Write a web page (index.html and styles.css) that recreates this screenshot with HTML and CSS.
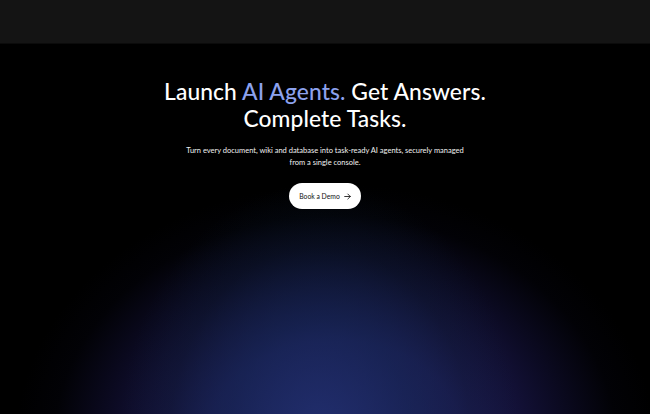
FILE: index.html
```html
<!DOCTYPE html>
<html lang="en">
<head>
<meta charset="utf-8">
<title>Launch AI Agents</title>
<link rel="stylesheet" href="styles.css">
</head>
<body>
<header class="topbar"></header>
<main class="hero">
  <div class="glow"></div>
  <div class="content">
    <h1 class="title">Launch <span class="accent">AI Agents.</span> Get Answers.<br>Complete Tasks.</h1>
    <p class="subtitle">Turn every document, wiki and database into task-ready AI agents, securely managed<br>from a single console.</p>
    <a class="btn" href="#">Book a Demo
      <svg class="arrow" viewBox="0 0 10 10" width="7" height="7"><path d="M1 5h8M5.5 1.5L9 5 5.5 8.5" fill="none" stroke="#111" stroke-width="1.2" stroke-linecap="round" stroke-linejoin="round"/></svg>
    </a>
  </div>
</main>
</body>
</html>
```
FILE: styles.css
```css
* { box-sizing: border-box; }
html, body { margin: 0; padding: 0; height: 100%; }
body {
  background: #000;
  font-family: "Lato", "Open Sans", sans-serif;
  color: #fff;
  overflow: hidden;
}
.topbar {
  height: 44px;
  background: #141414;
  border-bottom: 1px solid #0b0b0b;
}
.hero {
  position: relative;
  height: 370px;
  overflow: hidden;
}
.glow {
  position: absolute;
  inset: 0;
  background:
    radial-gradient(ellipse 200px 250px at 320px 390px, rgba(32,48,110,0.85) 0%, rgba(18,40,80,0.55) 45%, rgba(10,28,45,0.3) 75%, rgba(0,0,0,0) 100%),
    radial-gradient(ellipse 320px 260px at 335px 400px, rgba(40,34,108,1) 0%, rgba(34,30,96,0.9) 40%, rgba(20,18,60,0.6) 70%, rgba(6,6,20,0.3) 88%, rgba(0,0,0,0) 100%);
}
.content {
  position: relative;
  display: flex;
  flex-direction: column;
  align-items: center;
  padding-top: 34px;
}
.title {
  margin: 0;
  font-size: 22.8px;
  line-height: 27px;
  font-weight: 500;
  text-align: center;
  letter-spacing: 0.1px;
}
.accent { color: #8ca2ee; }
.subtitle {
  margin: 13px 0 0;
  font-size: 7.5px;
  line-height: 11.5px;
  text-align: center;
  color: #f0f0f0;
}
.btn {
  margin-top: 15px;
  display: inline-flex;
  align-items: center;
  gap: 4px;
  height: 26px;
  padding: 0 10px;
  background: #fff;
  color: #111;
  border-radius: 13px;
  font-size: 6.8px;
  text-decoration: none;
}
```
